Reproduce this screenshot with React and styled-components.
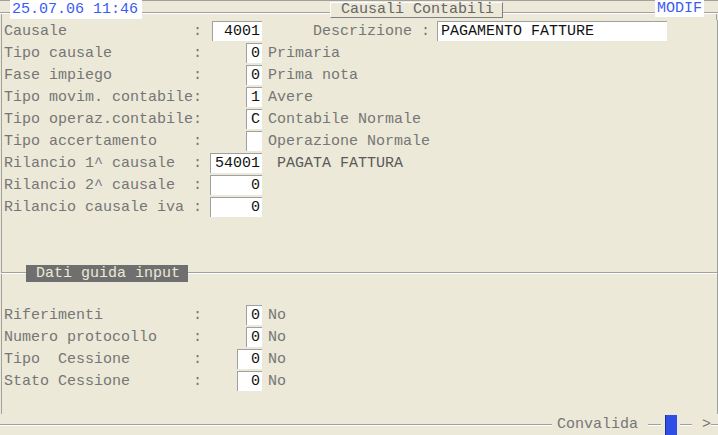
import React from "react";
import styled, { createGlobalStyle } from "styled-components";

const Global = createGlobalStyle`
  html, body { margin: 0; padding: 0; background: #ece9d8; }
  body { font-family: "Liberation Mono", "Courier New", monospace; font-size: 15px; }
  * { box-sizing: border-box; }
`;

const LINE = "#a0a0a0";

const Screen = styled.div`
  width: 718px;
  height: 435px;
  display: flex;
  flex-direction: column;
  background: #ece9d8;
  overflow: hidden;
  color: #767676;
`;

const TopBar = styled.div`
  height: 20px;
  display: flex;
  align-items: flex-start;
  background:
    linear-gradient(${LINE}, ${LINE}) 0 0 / 100% 1px no-repeat,
    linear-gradient(${LINE}, ${LINE}) 0 12px / 100% 1px no-repeat,
    linear-gradient(#fff, #fff) 0 13px / 100% 1px no-repeat,
    linear-gradient(${LINE}, ${LINE}) 1px 12px / 1px 8px no-repeat,
    linear-gradient(${LINE}, ${LINE}) 716px 12px / 1px 8px no-repeat;
`;

const StatusBox = styled.div`
  margin-left: ${(p) => p.$left}px;
  width: ${(p) => p.$width}px;
  height: ${(p) => p.$height}px;
  line-height: ${(p) => p.$height}px;
  background: #fff;
  color: #3a5cf2;
  padding-left: 2px;
  white-space: pre;
`;

const TitleBox = styled.div`
  margin-left: 188px;
  margin-top: 2px;
  width: 173px;
  height: 16px;
  line-height: 14px;
  padding-left: 10px;
  background: #ece9d8;
  border-top: 1px solid #fff;
  border-left: 1px solid #fff;
  border-right: 1px solid #808080;
  border-bottom: 1px solid #808080;
  color: #666;
  white-space: pre;
`;

const Body = styled.div`
  flex: 1;
  margin-left: 1px;
  border-left: 1px solid ${LINE};
  border-right: 1px solid ${LINE};
  padding-left: 2px;
  display: flex;
  flex-direction: column;
`;

const Row = styled.div`
  height: 22px;
  display: flex;
  align-items: center;
  white-space: pre;
`;

const Label = styled.span`
  width: 206px;
  flex: none;
  color: #767676;
`;

const FieldCell = styled.div`
  width: 52px;
  flex: none;
  display: flex;
  justify-content: flex-end;
`;

const Input = styled.div`
  width: ${(p) => p.$width}px;
  height: 20px;
  line-height: 20px;
  background: #fff;
  border-top: 1px solid ${LINE};
  border-left: 1px solid ${LINE};
  color: #111;
  text-align: ${(p) => (p.$left ? "left" : "right")};
  padding: 0 2px 0 3px;
  margin-left: ${(p) => p.$ml || 0}px;
  white-space: pre;
`;

const Desc = styled.span`
  margin-left: ${(p) => (p.$ml === undefined ? 6 : p.$ml)}px;
  color: ${(p) => (p.$dark ? "#5a5a5a" : "#767676")};
`;

const Divider = styled.div`
  margin-top: 46px;
  height: 18px;
  display: flex;
  align-items: center;
  margin-left: -3px;
`;

const Rule = styled.div`
  height: 2px;
  border-top: 1px solid ${LINE};
  border-bottom: 1px solid #fff;
  width: ${(p) => (p.$width ? `${p.$width}px` : "auto")};
  flex: ${(p) => (p.$width ? "none" : 1)};
`;

const Tab = styled.div`
  width: 162px;
  height: 17px;
  line-height: 17px;
  background: #6f6f6f;
  color: #ece9d8;
  padding-left: 10px;
  white-space: pre;
`;

const Lower = styled.div`
  margin-top: 22px;
  display: flex;
  flex-direction: column;
`;

const Footer = styled.div`
  height: 21px;
  display: flex;
  align-items: center;
  white-space: pre;
`;

const FootText = styled.span`
  color: #767676;
  margin: 0 ${(p) => p.$mr || 0}px 0 ${(p) => p.$ml || 0}px;
`;

const Cursor = styled.div`
  width: 12px;
  height: 20px;
  margin: 1px 3px 0 4px;
  background: #2f4ee6;
  border-left: 1px solid #1d2f9c;
`;

const upper = [
  { label: "Tipo causale", w: 16, v: "0", d: "Primaria" },
  { label: "Fase impiego", w: 16, v: "0", d: "Prima nota" },
  { label: "Tipo movim. contabile", w: 16, v: "1", d: "Avere" },
  { label: "Tipo operaz.contabile", w: 16, v: "C", d: "Contabile Normale" },
  { label: "Tipo accertamento", w: 16, v: "", d: "Operazione Normale" },
  { label: "Rilancio 1^ causale", w: 52, v: "54001", d: " PAGATA FATTURA", dark: true },
  { label: "Rilancio 2^ causale", w: 52, v: "0", d: "" },
  { label: "Rilancio causale iva", w: 52, v: "0", d: "" },
];

const lower = [
  { label: "Riferimenti", w: 16, v: "0", d: "No" },
  { label: "Numero protocollo", w: 16, v: "0", d: "No" },
  { label: "Tipo  Cessione", w: 25, v: "0", d: "No" },
  { label: "Stato Cessione", w: 25, v: "0", d: "No" },
];

const pad = (s) => s.padEnd(21, " ") + ":";

function FieldRow({ label, w, v, d, dark }) {
  return (
    <Row>
      <Label>{pad(label)}</Label>
      <FieldCell>
        <Input $width={w}>{v}</Input>
      </FieldCell>
      {d ? <Desc $dark={dark}>{d}</Desc> : null}
    </Row>
  );
}

export default function App() {
  return (
    <>
      <Global />
      <Screen>
        <TopBar>
          <StatusBox $left={10} $width={132} $height={19}>25.07.06 11:46</StatusBox>
          <TitleBox>Causali Contabili</TitleBox>
          <StatusBox $left={152} $width={49} $height={17}>MODIF</StatusBox>
        </TopBar>
        <Body>
          <Row>
            <Label>{pad("Causale")}</Label>
            <FieldCell>
              <Input $width={50}>4001</Input>
            </FieldCell>
            <Desc $ml={51}>Descrizione :</Desc>
            <Input $width={230} $left $ml={7}>PAGAMENTO FATTURE</Input>
          </Row>
          {upper.map((r) => (
            <FieldRow key={r.label} {...r} />
          ))}
          <Divider>
            <Rule $width={25} />
            <Tab>Dati guida input</Tab>
            <Rule />
          </Divider>
          <Lower>
            {lower.map((r) => (
              <FieldRow key={r.label} {...r} />
            ))}
          </Lower>
        </Body>
        <Footer>
          <Rule />
          <FootText $ml={5} $mr={10}>Convalida</FootText>
          <Rule $width={13} />
          <Cursor />
          <Rule $width={12} />
          <FootText $ml={10}>&gt;</FootText>
          <Rule $width={7} />
        </Footer>
      </Screen>
    </>
  );
}
